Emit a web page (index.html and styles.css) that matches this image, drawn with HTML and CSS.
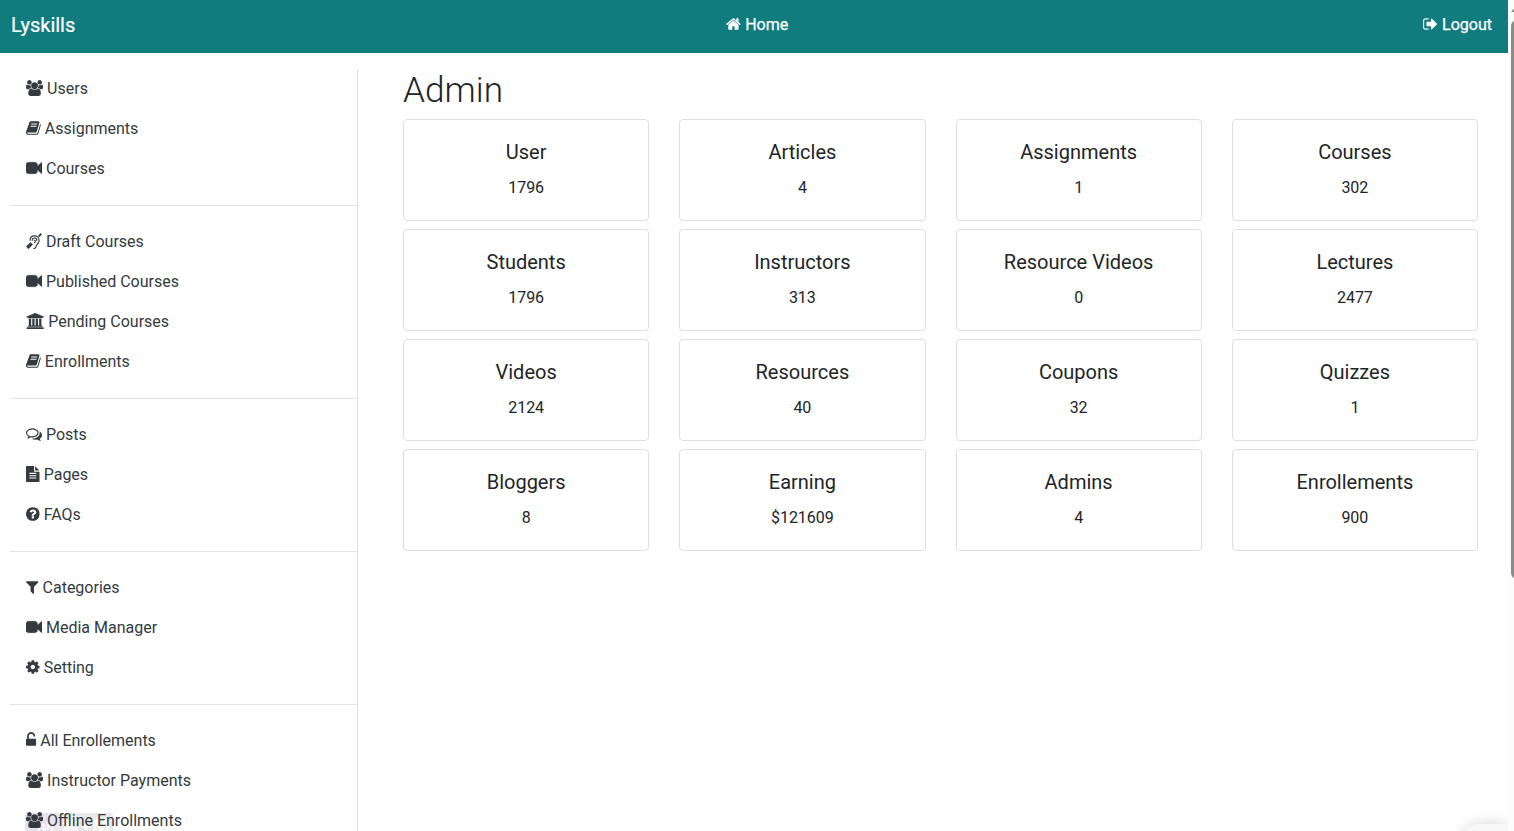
FILE: index.html
```html
<!DOCTYPE html>
<html lang="en">
<head>
<meta charset="utf-8">
<title>Lyskills Admin</title>
<link rel="stylesheet" href="styles.css">
</head>
<body>
<svg class="sprite" aria-hidden="true">
<symbol id="home" viewBox="64 0 1664 1792"><path d="M1472 992v480q0 26-19 45t-45 19h-384v-384h-256v384h-384q-26 0-45-19t-19-45v-480q0-1 .5-3t.5-3l575-474 575 474q1 2 1 6zm223-69l-62 74q-8 9-21 11h-3q-13 0-21-7l-692-577-692 577q-12 8-24 7-13-2-21-11l-62-74q-8-10-7-23.5t11-21.5l719-599q32-26 76-26t76 26l244 204v-195q0-14 9-23t23-9h192q14 0 23 9t9 23v408l219 182q10 8 11 21.5t-7 23.5z"/></symbol>
<symbol id="logout" viewBox="64 0 1664 1792"><path d="M704 1440q0 4 1 20t.5 26.5-3 23.5-10 19.5-20.5 6.5h-320q-119 0-203.5-84.5t-84.5-203.5v-704q0-119 84.5-203.5t203.5-84.5h320q13 0 22.5 9.5t9.5 22.5q0 4 1 20t.5 26.5-3 23.5-10 19.5-20.5 6.5h-320q-66 0-113 47t-47 113v704q0 66 47 113t113 47h312l11.5 1 11.5 3 8 5.5 7 9 2 13.5zm928-544q0 26-19 45l-544 544q-19 19-45 19t-45-19-19-45v-288h-448q-26 0-45-19t-19-45v-384q0-26 19-45t45-19h448v-288q0-26 19-45t45-19 45 19l544 544q19 19 19 45z"/></symbol>
<symbol id="users" viewBox="-64 0 1920 1792"><path d="M529 896q-162 5-265 128h-134q-82 0-138-40.5t-56-118.5q0-353 124-353 6 0 43.5 21t97.5 42.5 119 21.5q67 0 133-23-5 37-5 66 0 139 81 256zm1071 637q0 120-73 189.5t-194 69.5h-874q-121 0-194-69.5t-73-189.5q0-53 3.5-103.5t14-109 26.5-108.5 43-97.5 62-81 85.5-53.5 111.5-20q10 0 43 21.5t73 48 107 48 135 21.5 135-21.5 107-48 73-48 43-21.5q61 0 111.5 20t85.5 53.5 62 81 43 97.5 26.5 108.5 14 109 3.5 103.5zm-1024-1277q0 106-75 181t-181 75-181-75-75-181 75-181 181-75 181 75 75 181zm704 384q0 159-112.5 271.5t-271.5 112.5-271.5-112.5-112.5-271.5 112.5-271.5 271.5-112.5 271.5 112.5 112.5 271.5zm576 225q0 78-56 118.5t-138 40.5h-134q-103-123-265-128 81-117 81-256 0-29-5-66 66 23 133 23 59 0 119-21.5t97.5-42.5 43.5-21q124 0 124 353zm-128-609q0 106-75 181t-181 75-181-75-75-181 75-181 181-75 181 75 75 181z"/></symbol>
<symbol id="book" viewBox="64 0 1664 1792"><path d="M1703 478q40 57 18 129l-275 906q-19 64-76.5 107.5t-122.5 43.5h-923q-77 0-148.5-53.5t-99.5-131.5q-24-67-2-127 0-4 3-27t4-37q1-8-3-21.5t-3-19.5q2-11 8-21t16.5-23.5 16.5-23.5q23-38 45-91.5t30-91.5q3-10 .5-30t-.5-28q3-11 17-28t17-23q21-36 42-92t25-90q1-9-2.5-32t.5-28q4-13 22-30.5t22-22.5q19-26 42.5-84.5t27.5-96.5q1-8-3-25.5t-2-26.5q2-8 9-18t18-23 17-21q8-12 16.5-30.5t15-35 16-36 19.5-32 26.5-23.5 36-11.5 47.5 5.5l-1 3q38-9 51-9h761q74 0 114 56t18 130l-274 906q-36 119-71.5 153.5t-128.5 34.5h-869q-27 0-38 15-11 16-1 43 24 70 144 70h923q29 0 56-15.5t35-41.5l300-987q7-22 5-57 38 15 59 43zm-1064 2q-4 13 2 22.5t20 9.5h608q13 0 25.5-9.5t16.5-22.5l21-64q4-13-2-22.5t-20-9.5h-608q-13 0-25.5 9.5t-16.5 22.5zm-83 256q-4 13 2 22.5t20 9.5h608q13 0 25.5-9.5t16.5-22.5l21-64q4-13-2-22.5t-20-9.5h-608q-13 0-25.5 9.5t-16.5 22.5z"/></symbol>
<symbol id="video" viewBox="0 0 1792 1792"><path class="bold" d="M1792 352v1088q0 42-39 59-13 5-25 5-27 0-45-19l-403-403v166q0 119-84.5 203.5t-203.5 84.5h-704q-119 0-203.5-84.5t-84.5-203.5v-704q0-119 84.5-203.5t203.5-84.5h704q119 0 203.5 84.5t84.5 203.5v165l403-402q18-19 45-19 12 0 25 5 39 17 39 59z"/></symbol>
<symbol id="deaf" viewBox="0 0 16 16"><path d="M.1 13.6 4.4 9.2 7 11.6 2.4 16zM12 2.9 14.5.1 16 1.5 13.2 4.2z"/><path class="line" d="M4 7.2C4.1 4.6 6 2.8 8.4 2.8c2.7 0 4.7 2 4.7 4.6 0 3.2-3 4-3 6.2 0 1.2-.9 1.9-2.2 1.9M6.2 7.3c0-1.4 1-2.3 2.3-2.3s2.3 1 2.3 2.3M8.3 7.2c1.5.2 1.6 1.7.2 2.5"/></symbol>
<symbol id="bank" viewBox="0 0 1920 1792"><path d="M960 0l960 384v128h-128q0 26-20.5 45t-48.5 19h-1526q-28 0-48.5-19t-20.5-45h-128v-128zm-704 640h256v768h128v-768h256v768h128v-768h256v768h128v-768h256v768h59q28 0 48.5 19t20.5 45v64h-1664v-64q0-26 20.5-45t48.5-19h59v-768zm1595 960q28 0 48.5 19t20.5 45v128h-1920v-128q0-26 20.5-45t48.5-19h1782z"/></symbol>
<symbol id="comments" viewBox="0 0 1792 1792"><path d="M704 384q-153 0-286 52t-211.5 141-78.5 191q0 82 53 158t149 132l97 56-35 84q34-20 62-39l44-31 53 10q78 14 153 14 153 0 286-52t211.5-141 78.5-191-78.5-191-211.5-141-286-52zm0-128q191 0 353.5 68.5t256.5 186.5 94 257-94 257-256.5 186.5-353.5 68.5q-86 0-176-16-124 88-278 128-36 9-86 16h-3q-11 0-20.5-8t-11.5-21q-1-3-1-6.5t.5-6.5 2-6l2.5-5 3.5-5.5 4-5 4.5-5 4-4.5q5-6 23-25t26-29.5 22.5-29 25-38.5 20.5-44q-124-72-195-177t-71-224q0-139 94-257t256.5-186.5 353.5-68.5zm822 1169q10 24 20.5 44t25 38.5 22.5 29 26 29.5 23 25q1 1 4 4.5t4.5 5 4 5 3.5 5.5l2.5 5 2 6 .5 6.5-1 6.5q-3 14-13 22t-22 7q-50-7-86-16-154-40-278-128-90 16-176 16-271 0-472-132 58 4 88 4 161 0 309-45t264-129q125-92 192-212t67-254q0-77-23-152 129 71 204 178t75 230q0 120-71 224.5t-195 176.5z"/></symbol>
<symbol id="file" viewBox="128 0 1536 1792"><path d="M1596 476q14 14 28 36h-472v-472q22 14 36 28zm-476 164h544v1056q0 40-28 68t-68 28h-1344q-40 0-68-28t-28-68v-1600q0-40 28-68t68-28h800v544q0 40 28 68t68 28zm160 736v-64q0-14-9-23t-23-9h-704q-14 0-23 9t-9 23v64q0 14 9 23t23 9h704q14 0 23-9t9-23zm0-256v-64q0-14-9-23t-23-9h-704q-14 0-23 9t-9 23v64q0 14 9 23t23 9h704q14 0 23-9t9-23zm0-256v-64q0-14-9-23t-23-9h-704q-14 0-23 9t-9 23v64q0 14 9 23t23 9h704q14 0 23-9t9-23z"/></symbol>
<symbol id="question" viewBox="128 0 1536 1792"><path d="M1024 1376v-192q0-14-9-23t-23-9h-192q-14 0-23 9t-9 23v192q0 14 9 23t23 9h192q14 0 23-9t9-23zm256-672q0-88-55.5-163t-138.5-116-170-41q-243 0-371 213-15 24 8 42l132 100q7 6 19 6 16 0 25-12 53-68 86-92 34-24 86-24 48 0 85.5 26t37.5 59q0 38-20 61t-68 45q-63 28-115.5 86.5t-52.5 125.5v36q0 14 9 23t23 9h192q14 0 23-9t9-23q0-19 21.5-49.5t54.5-49.5q32-18 49-28.5t46-35 44.5-48 28-60.5 12.5-81zm384 192q0 209-103 385.5t-279.5 279.5-385.5 103-385.5-103-279.5-279.5-103-385.5 103-385.5 279.5-279.5 385.5-103 385.5 103 279.5 279.5 103 385.5z"/></symbol>
<symbol id="filter" viewBox="192 0 1408 1792"><path d="M1595 295q17 41-14 70l-493 493v742q0 42-39 59-13 5-25 5-27 0-45-19l-256-256q-19-19-19-45v-486l-493-493q-31-29-14-70 17-39 59-39h1280q42 0 59 39z"/></symbol>
<symbol id="cog" viewBox="128 0 1536 1792"><path d="M1152 896q0-106-75-181t-181-75-181 75-75 181 75 181 181 75 181-75 75-181zm512-109v222q0 12-8 23t-20 13l-185 28q-19 54-39 91 35 50 107 138 10 12 10 25t-9 23q-27 37-99 108t-94 71q-12 0-26-9l-138-108q-44 23-91 38-16 136-29 186-7 28-36 28h-222q-14 0-24.5-8.5t-11.5-21.5l-28-184q-49-16-90-37l-141 107q-10 9-25 9-14 0-25-11-126-114-165-168-7-10-7-23 0-12 8-23 15-21 51-66.5t54-70.5q-27-50-41-99l-183-27q-13-2-21-12.5t-8-23.5v-222q0-12 8-23t19-13l186-28q14-46 39-92-40-57-107-138-10-12-10-24 0-10 9-23 26-36 98.5-107.5t94.5-71.5q13 0 26 10l138 107q44-23 91-38 16-136 29-186 7-28 36-28h222q14 0 24.5 8.5t11.5 21.5l28 184q49 16 90 37l142-107q9-9 24-9 13 0 25 10 129 119 165 170 7 8 7 22 0 12-8 23-15 21-51 66.5t-54 70.5q26 50 41 98l183 28q13 2 21 12.5t8 23.5z"/></symbol>
<symbol id="unlock" viewBox="320 0 1152 1792"><path d="M1376 768q40 0 68 28t28 68v576q0 40-28 68t-68 28h-960q-40 0-68-28t-28-68v-576q0-40 28-68t68-28h32v-320q0-185 131.5-316.5t316.5-131.5 316.5 131.5 131.5 316.5q0 26-19 45t-45 19h-64q-26 0-45-19t-19-45q0-106-75-181t-181-75-181 75-75 181v320h736z"/></symbol>
</svg>
<div class="page">
<header class="navbar">
<a class="brand">Lyskills</a>
<a class="nav-link home"><svg class="icon w13"><use href="#home"/></svg> Home</a>
<a class="nav-link"><svg class="icon w13"><use href="#logout"/></svg> Logout</a>
</header>
<div class="layout">
<nav class="sidebar">
<div class="group">
<a class="item"><svg class="icon w15"><use href="#users"/></svg> Users</a>
<a class="item"><svg class="icon w13"><use href="#book"/></svg> Assignments</a>
<a class="item"><svg class="icon w14"><use href="#video"/></svg> Courses</a>
</div>
<div class="group">
<a class="item"><svg class="icon w14"><use href="#deaf"/></svg> Draft Courses</a>
<a class="item"><svg class="icon w14"><use href="#video"/></svg> Published Courses</a>
<a class="item"><svg class="icon w16"><use href="#bank"/></svg> Pending Courses</a>
<a class="item"><svg class="icon w13"><use href="#book"/></svg> Enrollments</a>
</div>
<div class="group">
<a class="item"><svg class="icon w14"><use href="#comments"/></svg> Posts</a>
<a class="item"><svg class="icon w12"><use href="#file"/></svg> Pages</a>
<a class="item"><svg class="icon w12"><use href="#question"/></svg> FAQs</a>
</div>
<div class="group">
<a class="item"><svg class="icon w11"><use href="#filter"/></svg> Categories</a>
<a class="item"><svg class="icon w14"><use href="#video"/></svg> Media Manager</a>
<a class="item"><svg class="icon w12"><use href="#cog"/></svg> Setting</a>
</div>
<div class="group">
<a class="item"><svg class="icon w9"><use href="#unlock"/></svg> All Enrollements</a>
<a class="item"><svg class="icon w15"><use href="#users"/></svg> Instructor Payments</a>
<a class="item"><svg class="icon w15"><use href="#users"/></svg> Offline Enrollments</a>
</div>
</nav>
<main class="content">
<h1 class="title">Admin</h1>
<div class="cards">
<section class="card"><h2 class="label">User</h2><p class="value">1796</p></section>
<section class="card"><h2 class="label">Articles</h2><p class="value">4</p></section>
<section class="card"><h2 class="label">Assignments</h2><p class="value">1</p></section>
<section class="card"><h2 class="label">Courses</h2><p class="value">302</p></section>
<section class="card"><h2 class="label">Students</h2><p class="value">1796</p></section>
<section class="card"><h2 class="label">Instructors</h2><p class="value">313</p></section>
<section class="card"><h2 class="label">Resource Videos</h2><p class="value">0</p></section>
<section class="card"><h2 class="label">Lectures</h2><p class="value">2477</p></section>
<section class="card"><h2 class="label">Videos</h2><p class="value">2124</p></section>
<section class="card"><h2 class="label">Resources</h2><p class="value">40</p></section>
<section class="card"><h2 class="label">Coupons</h2><p class="value">32</p></section>
<section class="card"><h2 class="label">Quizzes</h2><p class="value">1</p></section>
<section class="card"><h2 class="label">Bloggers</h2><p class="value">8</p></section>
<section class="card"><h2 class="label">Earning</h2><p class="value">$121609</p></section>
<section class="card"><h2 class="label">Admins</h2><p class="value">4</p></section>
<section class="card"><h2 class="label">Enrollements</h2><p class="value">900</p></section>
</div>
</main>
</div>
</div>
<div class="shortcut"><span class="key">G5</span><span>⌘+M</span></div>
<div class="popup"></div>
<div class="scrollbar"><div class="arrow"></div><div class="thumb"></div></div>
</body>
</html>
```
FILE: styles.css
```css
* { box-sizing: border-box; }
html, body { height: 100%; }
body { margin: 0; display: flex; overflow: hidden; position: relative; background: #fff; color: #212529; font: 400 16px/24px Roboto, sans-serif; }
h1, h2, p { margin: 0; }
.sprite { position: absolute; width: 0; height: 0; }
.page { position: relative; z-index: 1; width: 1508px; height: 831px; overflow: hidden; }
.navbar { height: 53px; padding: 0 16px 4px 11px; display: flex; justify-content: space-between; align-items: center; background: #107c7e; color: #fff; }
.nav-link { -webkit-text-stroke: .25px #fff; }
.home { margin-left: 16px; }
.brand { font-size: 20px; line-height: 30px; padding-top: 1px; -webkit-text-stroke: .2px #fff; }
.icon { height: 16px; fill: currentColor; vertical-align: -2.3px; overflow: visible; }
.bold { stroke: currentColor; stroke-width: 50; }
.line { fill: none; stroke: currentColor; stroke-width: 1.15; stroke-linecap: round; }
.w9 { width: 10.29px; }
.w11 { width: 12.57px; }
.w12 { width: 13.71px; }
.w13 { width: 14.86px; }
.w14 { width: 16px; }
.w15 { width: 17.14px; }
.w16 { width: 18.29px; }
.layout { display: flex; padding-top: 16px; }
.sidebar { width: 348px; height: 900px; margin-left: 10px; flex: none; border-right: 1px solid #dee2e6; }
.group { padding-bottom: 16px; }
.group + .group { border-top: 1px solid #e3e3e3; padding-top: 16px; }
.item { display: block; height: 40px; padding: 8px 16px; color: #343a40; white-space: nowrap; }
.content { flex: 1; padding: 0 30px 0 45px; }
.title { font-size: 35.2px; line-height: 42px; font-weight: 300; margin-bottom: 8px; }
.cards { display: grid; grid-template-columns: repeat(4, 1fr); column-gap: 30px; row-gap: 8px; }
.card { height: 102px; padding: 20px; border: 1px solid #dfdfdf; border-radius: 4px; text-align: center; }
.label { font-size: 20px; line-height: 24px; font-weight: 400; margin-bottom: 12px; }
.value { line-height: 24px; }
.scrollbar { position: relative; width: 6px; height: 831px; overflow: hidden; background: #fcfcfc; }
.thumb { width: 12px; height: 559px; margin: 20px 0 0 3px; border-radius: 6px; background: #8b8b8b; }
.arrow { position: absolute; left: 3px; top: 6px; border: solid transparent; border-width: 0 5px 6px; border-bottom-color: #8b8b8b; }
.shortcut { position: absolute; left: 25px; top: 813px; width: 88px; height: 18px; display: flex; gap: 7px; border-radius: 4px 4px 0 0; background: #e9e9e9; color: #fff; font: 700 19px/28px Inter, sans-serif; overflow: hidden; }
.key { width: 29px; padding-left: 12px; background: #e7e2f0; font-size: 12px; line-height: 32px; }
.popup { position: absolute; z-index: 2; left: 1463px; top: 824px; width: 45px; height: 30px; border-radius: 16px 0 0; background: #f8f8f8; box-shadow: 0 0 14px rgba(0,0,0,.18); clip-path: inset(-30px 0 0 -30px); }
```
